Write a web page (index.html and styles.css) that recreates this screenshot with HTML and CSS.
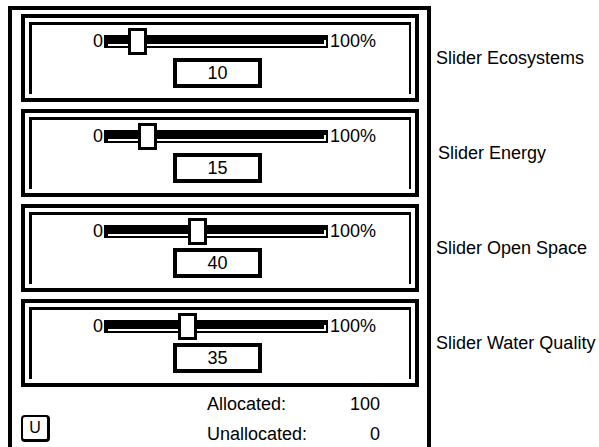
FILE: index.html
```html
<!DOCTYPE html>
<html lang="en">
<head>
  <meta charset="UTF-8">
  <title>Slider Allocation</title>
  <link rel="stylesheet" href="styles.css">
</head>
<body>
  <div class="screen">
    <div class="frame">
      <div class="card">
        <div class="card-inner">
          <div class="slider-row">
            <span class="end">0</span>
            <div class="track"><div class="thumb" style="left: 24px"></div></div>
            <span class="end">100%</span>
          </div>
          <div class="value">10</div>
        </div>
      </div>

      <div class="card">
        <div class="card-inner">
          <div class="slider-row">
            <span class="end">0</span>
            <div class="track"><div class="thumb" style="left: 34px"></div></div>
            <span class="end">100%</span>
          </div>
          <div class="value">15</div>
        </div>
      </div>

      <div class="card">
        <div class="card-inner">
          <div class="slider-row">
            <span class="end">0</span>
            <div class="track"><div class="thumb" style="left: 84px"></div></div>
            <span class="end">100%</span>
          </div>
          <div class="value">40</div>
        </div>
      </div>

      <div class="card">
        <div class="card-inner">
          <div class="slider-row">
            <span class="end">0</span>
            <div class="track"><div class="thumb" style="left: 74px"></div></div>
            <span class="end">100%</span>
          </div>
          <div class="value">35</div>
        </div>
      </div>

      <div class="footer">
        <button class="u-btn">U</button>
        <div class="totals">
          <span>Allocated:</span><span class="num">100</span>
          <span>Unallocated:</span><span class="num">0</span>
        </div>
      </div>
    </div>

    <div class="labels">
      <div class="label">Slider Ecosystems</div>
      <div class="label energy">Slider Energy</div>
      <div class="label">Slider Open Space</div>
      <div class="label">Slider Water Quality</div>
    </div>
  </div>
</body>
</html>
```

FILE: styles.css
```css
* {
  box-sizing: border-box;
}

body {
  margin: 0;
  font-family: "Liberation Sans", Arial, sans-serif;
  font-size: 18px;
  color: #000;
  background: #fff;
  overflow: hidden;
}

.screen {
  display: flex;
  height: 447px;
}

.frame {
  width: 423px;
  height: 441px;
  margin: 6px 0 0 8px;
  padding: 4px 8px 0 9px;
  border: 4px solid #000;
  border-bottom: none;
}

.card {
  height: 88px;
  margin-bottom: 7px;
  padding: 4px;
  border: 4px solid #000;
}

.card-inner {
  height: 100%;
  padding: 3px 0 0 0;
  border-top: 3px solid #000;
  border-left: 3px solid #000;
  border-right: 2px solid #000;
}

.slider-row {
  display: flex;
  align-items: center;
  height: 27px;
  padding-left: 61px;
}

.end {
  line-height: 27px;
}

.track {
  position: relative;
  width: 224px;
  height: 13px;
  margin: 0 2px 0 1px;
  background: #000;
}

.track::after {
  content: "";
  position: absolute;
  left: 4px;
  right: 2px;
  top: 5px;
  bottom: 2px;
  border-bottom: 2px solid #fff;
  border-right: 2px solid #fff;
}

.thumb {
  position: absolute;
  top: -7px;
  width: 19px;
  height: 27px;
  background: #fff;
  border: 3px solid #000;
  z-index: 1;
}

.value {
  width: 89px;
  height: 30px;
  margin: 3px 0 0 141px;
  border: 4px solid #000;
  text-align: center;
  line-height: 22px;
}

.footer {
  display: flex;
  margin-top: -5px;
}

.u-btn {
  width: 29px;
  height: 27px;
  margin-top: 26px;
  padding: 0;
  font-family: "Liberation Sans", Arial, sans-serif;
  font-size: 16px;
  background: #fff;
  border: 2px solid #000;
  border-right-width: 3px;
  border-bottom-width: 3px;
  border-radius: 4px;
}

.totals {
  display: grid;
  grid-template-columns: 130px 43px;
  grid-auto-rows: 30px;
  align-items: center;
  margin-left: 157px;
  line-height: 20px;
}

.totals .num {
  text-align: right;
}

.labels {
  padding: 14px 0 0 5px;
}

.label {
  display: flex;
  align-items: center;
  height: 88px;
  margin-bottom: 7px;
  white-space: nowrap;
}

.label.energy {
  padding-left: 2px;
}
```
